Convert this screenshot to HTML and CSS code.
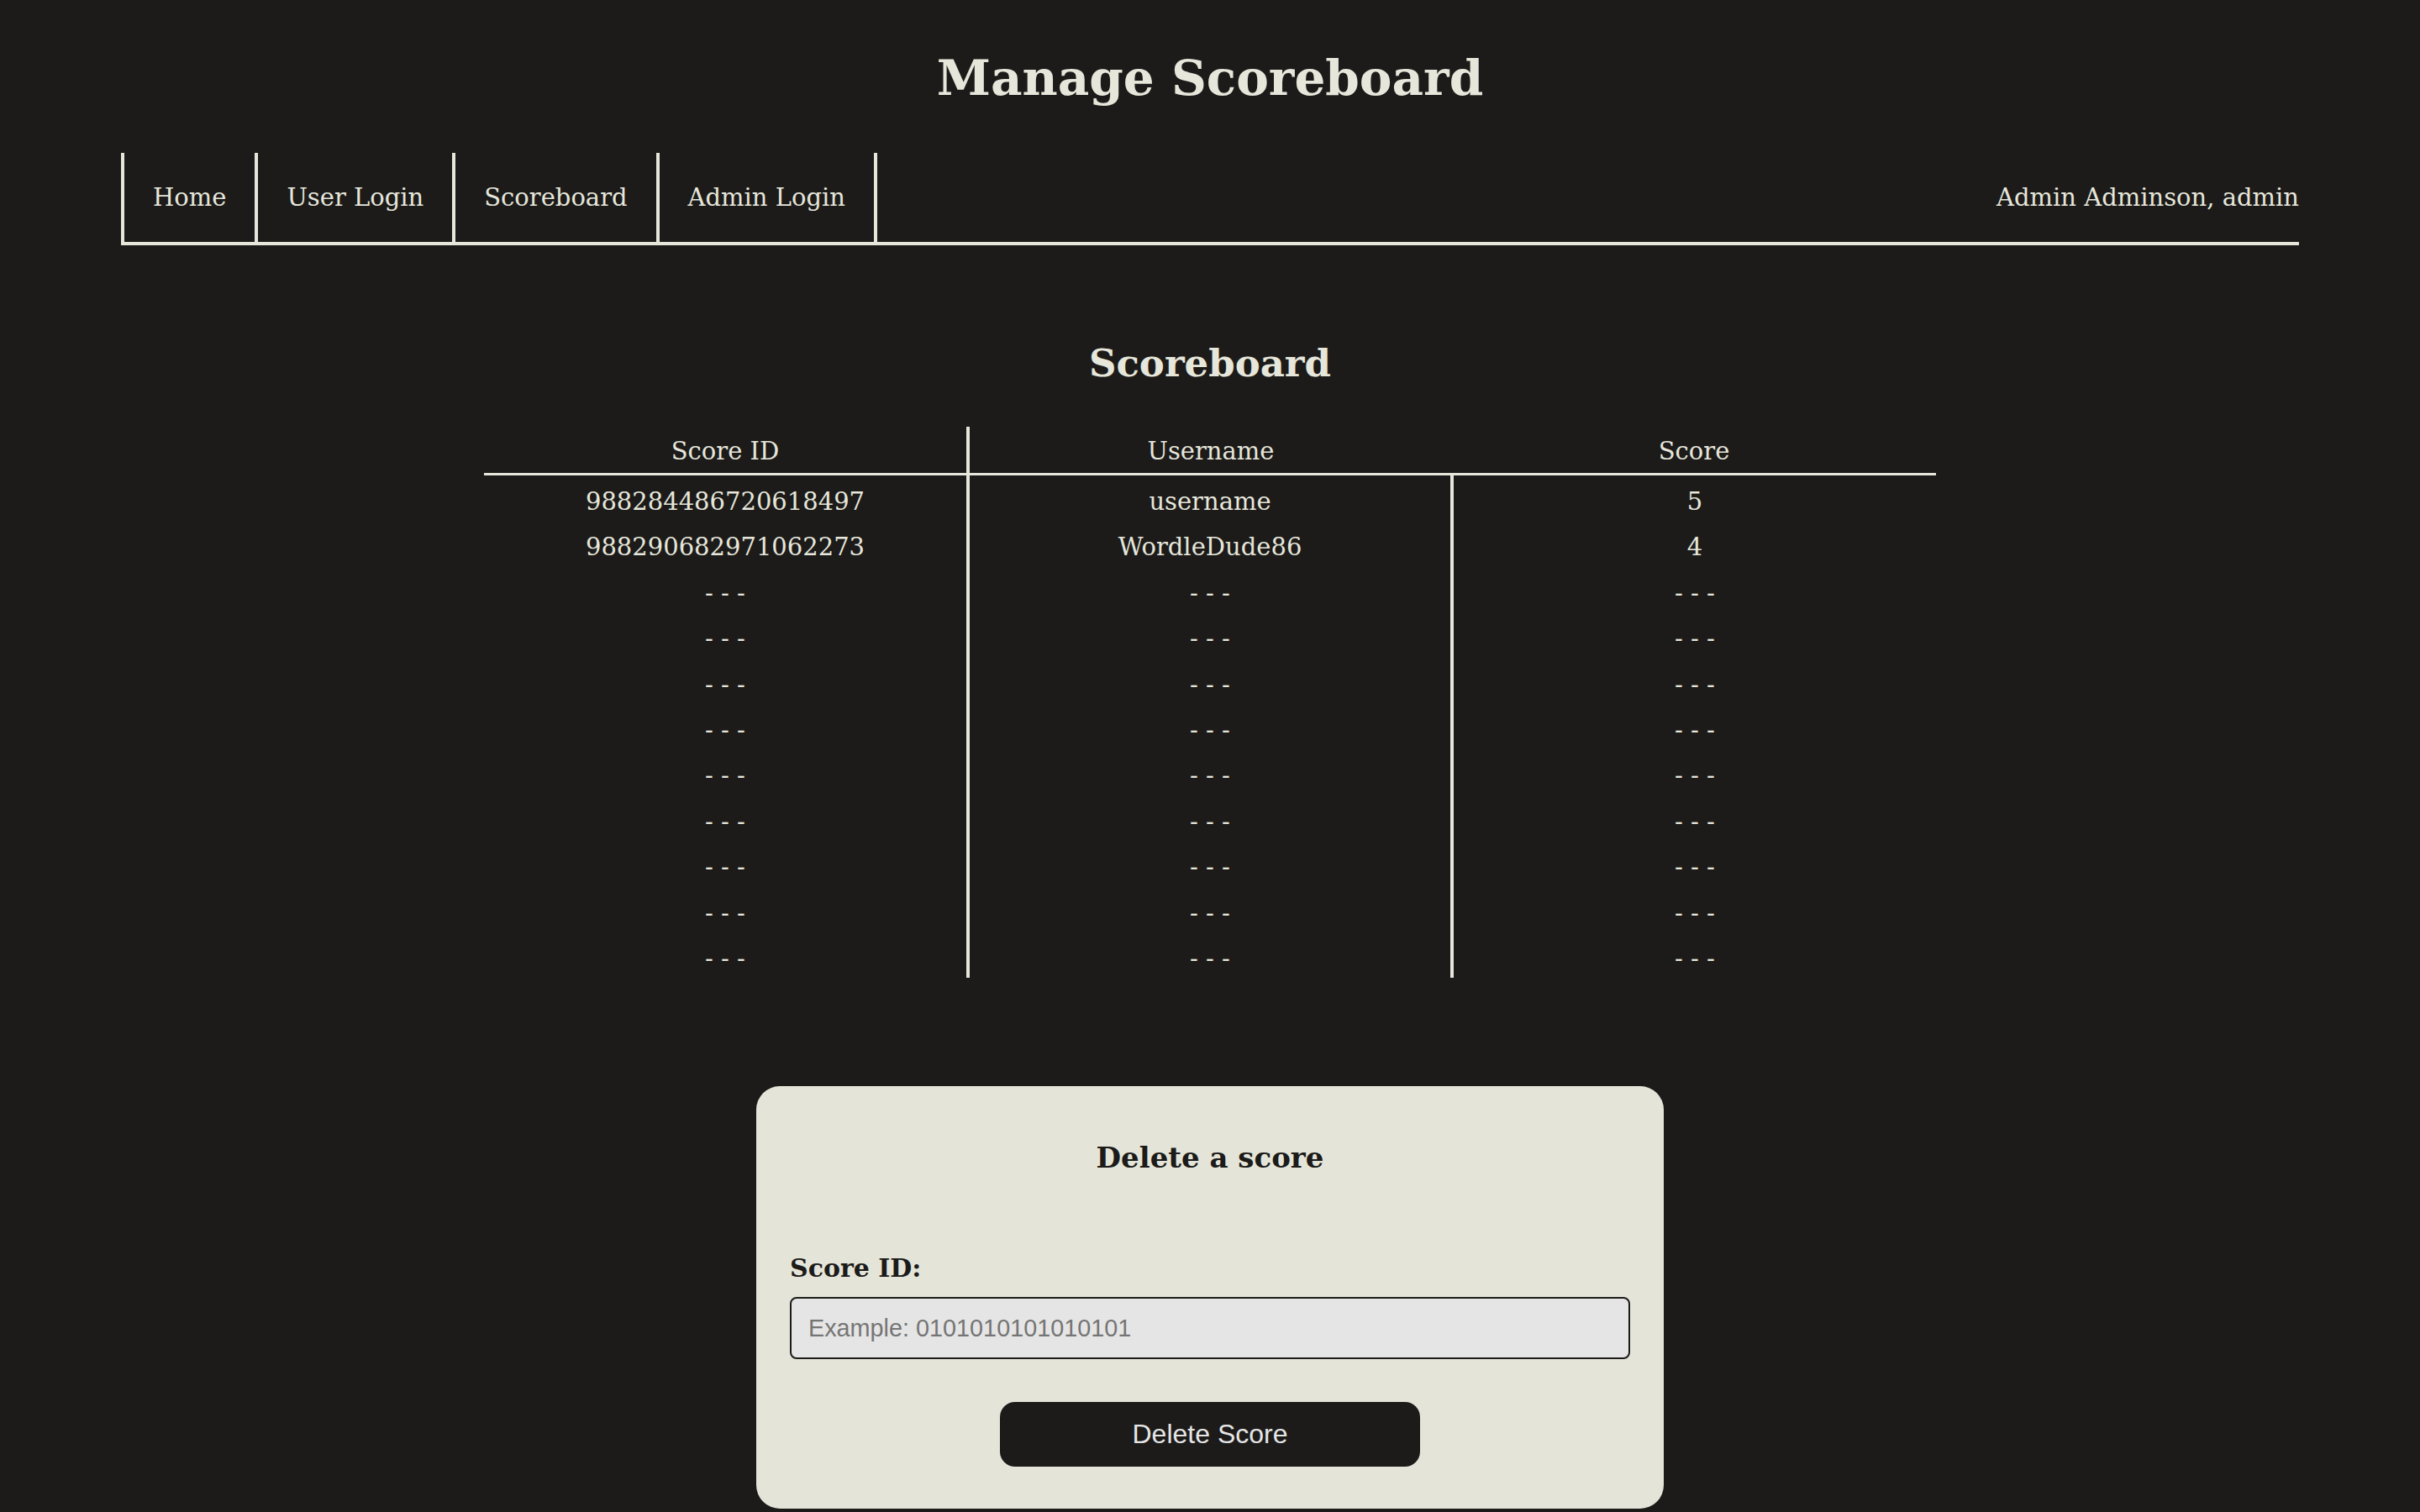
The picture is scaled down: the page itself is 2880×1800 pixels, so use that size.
FILE: index.html
```html
<!DOCTYPE html>
<html lang="en">
<head>
<meta charset="utf-8">
<title>Manage Scoreboard</title>
<link rel="stylesheet" href="styles.css">
</head>
<body>
<header class="page-header">
  <h1 class="page-title">Manage Scoreboard</h1>
  <nav class="nav">
    <ul class="nav-list">
      <li class="nav-item"><a class="nav-link" href="#">Home</a></li>
      <li class="nav-item"><a class="nav-link" href="#">User Login</a></li>
      <li class="nav-item"><a class="nav-link" href="#">Scoreboard</a></li>
      <li class="nav-item"><a class="nav-link" href="#">Admin Login</a></li>
    </ul>
    <div class="nav-user">Admin Adminson, admin</div>
  </nav>
</header>
<main class="main">
  <h2 class="section-title">Scoreboard</h2>
  <table class="scores">
    <thead>
      <tr><th>Score ID</th><th>Username</th><th>Score</th></tr>
    </thead>
    <tbody>
      <tr><td>988284486720618497</td><td>username</td><td>5</td></tr>
      <tr><td>988290682971062273</td><td>WordleDude86</td><td>4</td></tr>
      <tr><td>- - -</td><td>- - -</td><td>- - -</td></tr>
      <tr><td>- - -</td><td>- - -</td><td>- - -</td></tr>
      <tr><td>- - -</td><td>- - -</td><td>- - -</td></tr>
      <tr><td>- - -</td><td>- - -</td><td>- - -</td></tr>
      <tr><td>- - -</td><td>- - -</td><td>- - -</td></tr>
      <tr><td>- - -</td><td>- - -</td><td>- - -</td></tr>
      <tr><td>- - -</td><td>- - -</td><td>- - -</td></tr>
      <tr><td>- - -</td><td>- - -</td><td>- - -</td></tr>
      <tr><td>- - -</td><td>- - -</td><td>- - -</td></tr>
    </tbody>
  </table>
  <form class="card">
    <h3 class="card-title">Delete a score</h3>
    <label class="field-label" for="scoreId">Score ID:</label>
    <input class="field-input" id="scoreId" type="text" placeholder="Example: 0101010101010101">
    <button class="btn" type="button">Delete Score</button>
  </form>
</main>
</body>
</html>
```

FILE: styles.css
```css
* { box-sizing: border-box; }

html, body {
  margin: 0;
  padding: 0;
  background: #1c1b1a;
  color: #e6e6da;
  font-family: "DejaVu Serif", "Liberation Serif", serif;
}

.page-header {
  padding-top: 57px;
}

.page-title {
  margin: 0;
  text-align: center;
  font-size: 58px;
  line-height: 72px;
  font-weight: bold;
}

.nav {
  width: 90%;
  margin: 53px auto 0;
  display: flex;
  justify-content: space-between;
  align-items: center;
  border-bottom: 4px solid #e6e6da;
}

.nav-list {
  list-style: none;
  margin: 0;
  padding: 0;
  display: flex;
  border-left: 4px solid #e6e6da;
}

.nav-item {
  border-right: 4px solid #e6e6da;
}

.nav-link {
  display: block;
  padding: 0 34px;
  height: 106px;
  line-height: 106px;
  font-size: 29px;
  color: #e6e6da;
  text-decoration: none;
}

.nav-link-wide {
  padding: 0 37px;
}

.nav-user {
  font-size: 29px;
  line-height: 106px;
}

.main {
  display: flex;
  flex-direction: column;
  align-items: center;
}

.section-title {
  margin: 110px 0 45px;
  font-size: 45px;
  line-height: 61px;
  font-weight: bold;
}

.scores {
  width: 60%;
  border-collapse: collapse;
  font-size: 29px;
}

.scores th {
  font-weight: normal;
  height: 55px;
  line-height: 51px;
  padding: 4px 0 0;
  border-bottom: 3px solid #e6e6da;
}

.scores th:first-child {
  border-right: 4px solid #e6e6da;
}

.scores td {
  height: 54.4px;
  line-height: 46.4px;
  padding: 8px 0 0;
  text-align: center;
  width: 33.333%;
}

.scores td:nth-child(2) {
  border-left: 4px solid #e6e6da;
  border-right: 4px solid #e6e6da;
}

.card {
  width: 1080px;
  margin-top: 129px;
  background: #e4e5d8;
  color: #1c1b1a;
  border-radius: 28px;
  padding: 63px 40px 50px;
  display: flex;
  flex-direction: column;
}

.card-title {
  margin: 0;
  text-align: center;
  font-size: 34px;
  line-height: 44px;
  font-weight: bold;
}

.field-label {
  margin-top: 90px;
  font-size: 30px;
  line-height: 40px;
  font-weight: bold;
}

.field-input {
  margin-top: 14px;
  height: 74px;
  width: 100%;
  border: 2px solid #1c1b1a;
  border-radius: 8px;
  background: #e5e5e5;
  padding: 0 20px;
  font-family: "Liberation Sans", Arial, sans-serif;
  font-size: 28.8px;
  color: #1c1b1a;
}

.field-input::placeholder {
  color: #757575;
}

.btn {
  align-self: center;
  margin-top: 51px;
  width: 500px;
  height: 77px;
  border: none;
  border-radius: 18px;
  background: #1c1b1a;
  color: #e6e6e6;
  font-family: "Liberation Sans", Arial, sans-serif;
  font-size: 32px;
}
```
